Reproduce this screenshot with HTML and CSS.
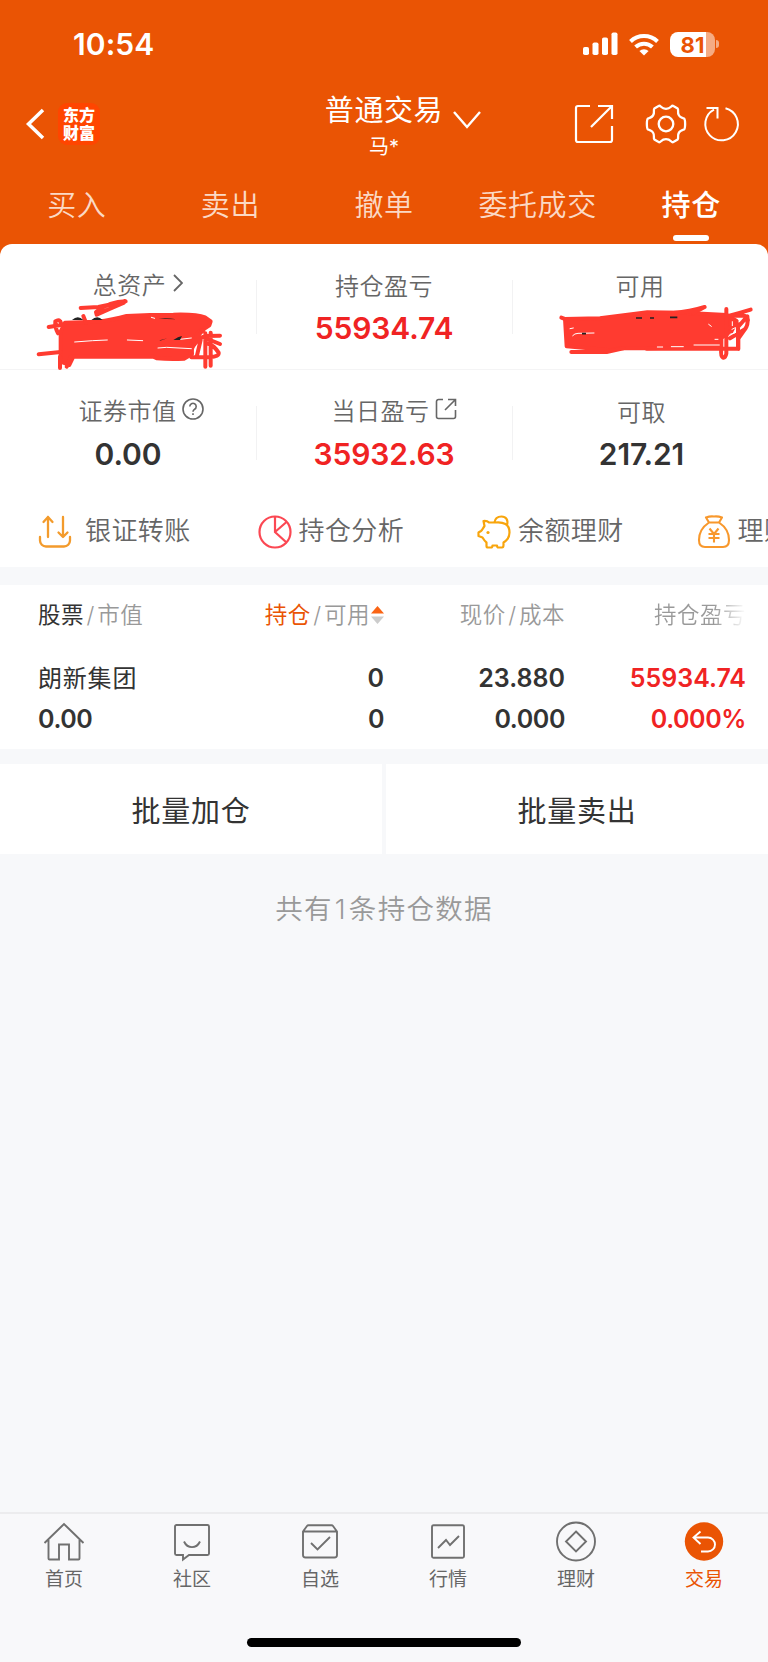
FILE: index.html
```html
<!DOCTYPE html>
<html lang="zh-CN">
<head>
    <meta charset="UTF-8">
    <meta name="viewport" content="width=device-width, initial-scale=1.0">
    <title>普通交易 - 持仓</title>
    <link rel="stylesheet" href="styles.css">
</head>
<body>
    <!-- 顶部 -->
    <header class="header">
        <div class="status-bar">
            <span class="time">10:54</span>
            <div class="status-icons">
                <svg width="36" height="24" viewBox="0 0 36 24" fill="#fff">
                    <rect x="0" y="15" width="6" height="8" rx="1.8"/>
                    <rect x="9.5" y="10.5" width="6" height="12.5" rx="1.8"/>
                    <rect x="19" y="5.5" width="6" height="17.5" rx="1.8"/>
                    <rect x="28.5" y="0.5" width="6" height="22.5" rx="1.8"/>
                </svg>
                <svg class="wifi" width="30" height="23" viewBox="0 0 30 23" fill="none" stroke="#fff" stroke-width="4">
                    <path d="M1.500 8.500a19.500 19.500 0 0 1 27 0"/>
                    <path d="M6.600 14a12.200 12.200 0 0 1 16.800 0"/>
                    <path d="M15 22.500l-4.600-4.400a6.800 6.800 0 0 1 9.200 0z" fill="#fff" stroke="none"/>
                </svg>
                <div class="battery"><span>81</span></div>
                <i class="battery-tip"></i>
            </div>
        </div>

        <div class="nav">
            <div class="nav-left">
                <svg width="20" height="34" viewBox="0 0 20 34" fill="none" stroke="#fff" stroke-width="3.5"><path d="M18 3L3.500 17 18 31"/></svg>
                <div class="logo">东方<br>财富</div>
            </div>
            <div class="nav-title">
                <h1>普通交易</h1>
                <p>马*</p>
            </div>
            <svg class="nav-arrow" width="28" height="18" viewBox="0 0 28 18" fill="none" stroke="#fff" stroke-width="2.4"><path d="M1 1l13 15L27 1"/></svg>
            <div class="nav-right">
                <svg width="40" height="40" viewBox="0 0 40 40" fill="none" stroke="#fff" stroke-width="2.2">
                    <path d="M16 2H4a2 2 0 0 0-2 2v32a2 2 0 0 0 2 2h32a2 2 0 0 0 2-2V22"/>
                    <path d="M24 2h14v13M38 2L17 23"/>
                </svg>
                <svg class="gear" width="42" height="42" viewBox="0 0 42 42" fill="none" stroke="#fff" stroke-width="2.3">
                    <circle cx="21" cy="21" r="7.3"/>
                    <path d="M14 2.800C16 2.300 16 5.800 21 5.800S26 2.300 28 2.800l4.600 2.700c1.500 1.500-.8 3.500 1.400 7 1.500 2.300 3 2 5 3 1.500 1 1.500 10 0 11-2 1-3.500.7-5 3-2.200 3.500.1 5.500-1.400 7L28 39.200c-2 .5-2-3-7-3s-5 3.500-7 3l-4.600-2.700c-1.500-1.500.8-3.500-1.400-7-1.500-2.300-3-2-5-3-1.500-1-1.500-10 0-11 2-1 3.500-.7 5-3 2.200-3.500-.1-5.500 1.400-7z"/>
                </svg>
                <svg width="38" height="38" viewBox="0 0 38 38" fill="none" stroke="#fff" stroke-width="2">
                    <path d="M22.500 3.200A16.300 16.300 0 1 1 11 4.600M3.500 3H14.500V13.500"/>
                </svg>
            </div>
        </div>

        <nav class="tabs">
            <a>买入</a>
            <a>卖出</a>
            <a>撤单</a>
            <a>委托成交</a>
            <a class="on">持仓</a>
        </nav>
    </header>

    <!-- 资产 -->
    <section class="assets">
        <div class="asset-row">
            <div class="cell">
                <div class="label up total-label">总资产<svg class="more" width="10" height="18" viewBox="0 0 10 18" fill="none" stroke="#666" stroke-width="1.8"><path d="M1 1l8 8-8 8"/></svg></div>
                <svg class="mark mark-left" width="200" height="84" viewBox="0 0 600 252" fill="none" stroke="#ff3b30" stroke-width="12" stroke-linecap="round" stroke-linejoin="round">
                    <path d="M92 215V125L105 98 200 95Q250 90 290 78 360 74 430 74 500 72 525 82L542 94 538 106 520 118Q500 125 500 140L485 160 486 192 462 206Q420 208 380 205L370 200H130L118 225z" fill="#ff3b30"/>
                    <path d="M152 54L205 51 287 34Q240 34 198 66L200 74Q240 56 282 38M56 111L98 104M84 130Q74 112 76 94Q90 84 94 102M160 78L168 98M26 193L92 186M90 234V200M110 230L122 200M526 230V130M542 227V128M480 188Q500 140 530 138L570 137M520 142L570 162M490 152L520 120M484 202H540Q568 200 566 188 550 164 530 160M500 200L512 150"/>
                    <path d="M134 156L188 152 232 150M292 150L338 152M364 82L374 85M384 174L410 172 484 176M450 148L484 144" stroke="#fff" stroke-width="3"/>
                    <path d="M126 90Q144 74 160 90zM184 90Q202 74 218 90zM386 86Q410 83 440 88zM388 153L412 145 392 150zM430 150Q445 140 456 138L450 150z" fill="#222" stroke="none"/>
                </svg>
            </div>
            <div class="cell">
                <div class="label">持仓盈亏</div>
                <div class="value red">55934.74</div>
            </div>
            <div class="cell">
                <div class="label">可用</div>
                <svg class="mark mark-right" width="210" height="70" viewBox="0 0 630 210" fill="none" stroke="#ff3b30" stroke-width="12" stroke-linecap="round" stroke-linejoin="round">
                    <path d="M45 72L150 70 292 52 400 53 530 60 560 78 544 110 508 132 510 156 290 160H210L180 166 50 154z" fill="#ff3b30"/>
                    <path d="M34 68L50 74M370 54Q420 50 464 36L430 54M64 171H170L220 160M530 64Q570 54 602 44M529 42V176Q526 190 519 188 511 184 514 160V130M290 161H564V96L592 64Q596 90 584 104L564 132M550 62H582Q592 62 594 76M540 130L586 102M540 98L564 88M565 162V130"/>
                    <path d="M60 101L70 99M68 122Q74 115 84 115L132 114M476 88L484 94M432 150H508M364 155H400M322 156H338M495 133H504M547 80V92M546 103L556 98M540 118L554 114M540 144L554 140" stroke="#fff" stroke-width="3"/>
                    <path d="M96 116H108M258 69H276M300 69H312M360 67H382" stroke="#222" stroke-width="5" stroke-linecap="butt"/>
                </svg>
            </div>
        </div>
        <div class="asset-row">
            <div class="cell">
                <div class="label up icon-label">证券市值<svg width="22" height="22" viewBox="0 0 22 22" fill="none" stroke="#666" stroke-width="1.6">
                    <circle cx="11" cy="11" r="10"/>
                    <path d="M7.800 8.500a3.200 3.200 0 1 1 4.800 2.800c-1.200.7-1.600 1.200-1.600 2.500M11 15.200v1.800"/>
                </svg></div>
                <div class="value">0.00</div>
            </div>
            <div class="cell">
                <div class="label up icon-label today">当日盈亏<svg width="22" height="22" viewBox="0 0 22 22" fill="none" stroke="#666" stroke-width="1.6">
                    <path d="M8 1.500H3.500a2 2 0 0 0-2 2v15a2 2 0 0 0 2 2h15a2 2 0 0 0 2-2V12"/>
                    <path d="M13 1.500h7.500V8M20.500 1.500L10 12"/>
                </svg></div>
                <div class="value red">35932.63</div>
            </div>
            <div class="cell last">
                <div class="label">可取</div>
                <div class="value">217.21</div>
            </div>
        </div>

        <div class="actions">
            <div class="action first">
                <svg width="34" height="34" viewBox="0 0 34 34" fill="none" stroke="#f39b2c" stroke-width="2.3" stroke-linecap="round" stroke-linejoin="round">
                    <path d="M2 22v3.500a6 6 0 0 0 6 6h18a6 6 0 0 0 6-6V22"/>
                    <path d="M10 22V2M5.500 7L10 2l4.500 5M25 2v20M20.500 17.500L25 22l4.500-4.500"/>
                </svg>
                <span>银证转账</span>
            </div>
            <div class="action">
                <svg width="34" height="34" viewBox="0 0 34 34" fill="none" stroke="#fb4853" stroke-width="2.2">
                    <circle cx="17" cy="17" r="15.5"/>
                    <path d="M17 1.500V17L28.500 27.500M17 17L28.500 7"/>
                </svg>
                <span>持仓分析</span>
            </div>
            <div class="action">
                <svg width="34" height="34" viewBox="0 0 34 34" fill="none" stroke="#f8a50c" stroke-width="2.2" stroke-linejoin="round">
                    <path d="M18 7.500H12C10.500 6 8.500 5.800 6.500 6L7.500 11C6 13 5.500 15 4 16L1.500 17.500V21L5.500 22.500C7 25 8 26.500 9.500 27.500V31Q9.500 32.500 11 32.500H14Q15.500 32.500 15.500 30.500H20Q20 32.500 21.500 32.500H25Q26.500 32.500 26.500 30V27.500C30.500 25 32.500 21.500 32.500 17.500C32.500 13.500 31 10.500 28.500 9C25 7 22 7 18 7.500z"/>
                    <path d="M17.500 7.500C18 3.500 21 1.500 24.500 1.500C29 1.500 31.500 5 30 10"/>
                    <circle cx="11" cy="17.5" r="1.6" fill="#f8a50c" stroke="none"/>
                </svg>
                <span>余额理财</span>
            </div>
            <div class="action">
                <svg width="34" height="34" viewBox="0 0 34 34" fill="none" stroke="#f8982c" stroke-width="2.1" stroke-linejoin="round">
                    <path d="M12 7.500L9 2.500Q13 1 17 1.500Q21 1 25 2.500L22 7.500zM12 7.500C6 11.500 2 18 2 25Q2 32 8 32H26Q32 32 32 25C32 18 28 11.500 22 7.500"/>
                    <path d="M12.500 13.500L17 19l4.500-5.500M11.500 19h11M11.500 23h11M17 19v8.500"/>
                </svg>
                <span>理财</span>
            </div>
        </div>
    </section>

    <!-- 持仓列表 -->
    <section class="holdings">
        <div class="row head">
            <div><b>股票</b><i>/</i>市值</div>
            <div class="sorted"><b>持仓</b><i>/</i>可用<svg width="13" height="20" viewBox="0 0 13 20"><path d="M0 8.500L6.500 1 13 8.500z" fill="#fa6414"/><path d="M0 11.500h13L6.500 19z" fill="#ccc"/></svg></div>
            <div>现价<i>/</i>成本</div>
            <div><span class="fade">持仓盈亏</span></div>
        </div>
        <div class="row stock">
            <div><span class="name">朗新集团</span></div>
            <div>0</div>
            <div>23.880</div>
            <div class="red">55934.74</div>
        </div>
        <div class="row stock second">
            <div>0.00</div>
            <div>0</div>
            <div>0.000</div>
            <div class="red">0.000%</div>
        </div>
    </section>

    <div class="batch">
        <button>批量加仓</button>
        <button>批量卖出</button>
    </div>

    <p class="total">共有<span>1</span>条持仓数据</p>

    <!-- 底部导航 -->
    <footer class="tabbar">
        <div class="tabbar-items">
            <a>
                <svg width="42" height="42" viewBox="0 0 42 42"><path d="M1.500 22L21 3l19.500 19M5.500 19v18.500a1 1 0 0 0 1 1H16v-15h10v15h9.500a1 1 0 0 0 1-1V19"/></svg>
                首页
            </a>
            <a>
                <svg width="42" height="42" viewBox="0 0 42 42"><path d="M5.500 4h31a1.500 1.500 0 0 1 1.500 1.500v27a1.500 1.500 0 0 1-1.500 1.500H18l-6 4.500V34H5.500a1.500 1.500 0 0 1-1.500-1.500v-27a1.500 1.500 0 0 1 1.500-1.500zM13 20.500c3.500 7.500 12.500 7.500 16 0"/></svg>
                社区
            </a>
            <a>
                <svg width="42" height="42" viewBox="0 0 42 42"><path d="M4 10.500l4-5.500q.5-.7 1.500-.7h23q1 0 1.500.7l4 5.500V34q0 2.500-2.500 2.500h-29Q4 36.500 4 34zM4 10.500h34M12 22l6.500 6.500L31 16"/></svg>
                自选
            </a>
            <a>
                <svg width="42" height="42" viewBox="0 0 42 42"><rect x="5" y="4.300" width="32" height="32.500" rx="1.500"/><path d="M11 27l8-8 4 5 9-9"/></svg>
                行情
            </a>
            <a>
                <svg width="42" height="42" viewBox="0 0 42 42"><circle cx="21" cy="20.500" r="19"/><path d="M21 10.500l10 10-10 10-10-10z"/></svg>
                理财
            </a>
            <a class="on">
                <svg width="42" height="42" viewBox="0 0 42 42"><circle cx="21" cy="20.500" r="19.200"/><path d="M17.500 10.500L10.500 16.500l7 6.500M10.500 16.500H25a7 7 0 0 1 0 14H18"/></svg>
                交易
            </a>
        </div>
        <div class="home-bar"></div>
    </footer>
</body>
</html>
```

FILE: styles.css
```css
* {
    box-sizing: border-box;
}
body {
    margin: 0;
    height: 1662px;
    display: flex;
    flex-direction: column;
    overflow: hidden;
    background-color: #f7f8fa;
    color: #333;
    font-family: Inter, "Noto Sans CJK SC", sans-serif;
}
svg {
    display: block;
    flex: none;
}
.red {
    color: #f02323;
}

/* 顶部 */
.header {
    height: 256px;
    background-color: #ea5404;
    color: #fff;
}
.status-bar {
    display: flex;
    justify-content: space-between;
    align-items: center;
    height: 88px;
    padding: 0 49px 0 73px;
}
.time {
    font-size: 30px;
    font-weight: 600;
    letter-spacing: 0.1px;
}
.status-icons {
    display: flex;
    align-items: center;
}
.wifi {
    margin: 0 11px 0 10px;
}
.battery {
    width: 45px;
    height: 25px;
    border-radius: 8px;
    background: linear-gradient(90deg, #fff 81%, #f5ab83 81%);
    color: #ea5404;
    font-size: 22px;
    font-weight: 700;
    line-height: 26px;
    text-align: center;
}
.battery-tip {
    width: 3px;
    height: 8px;
    margin-left: 1px;
    border-radius: 0 4px 4px 0;
    background-color: #f5ab83;
}
.nav {
    position: relative;
    display: flex;
    justify-content: space-between;
    height: 84px;
    padding: 0 27px 0 25px;
}
.nav-left,
.nav-right {
    display: flex;
    align-items: center;
    height: 72px;
}
.logo {
    width: 42px;
    height: 42px;
    margin-left: 13px;
    padding-top: 3px;
    border-radius: 9px;
    background-color: #ff4500;
    font-size: 16px;
    font-weight: 900;
    line-height: 18px;
    text-align: center;
}
.nav-title {
    position: absolute;
    left: 284px;
    top: 2px;
    width: 200px;
    text-align: center;
}
.nav-title h1 {
    margin: 0;
    font-size: 29px;
    font-weight: 400;
    line-height: 42px;
    letter-spacing: 0.6px;
}
.nav-title p {
    margin: 3px 0 0;
    font-size: 20px;
    line-height: 24px;
}
.nav-arrow {
    position: absolute;
    left: 453px;
    top: 23px;
}
.gear {
    margin: 0 16px 0 31px;
}
.tabs {
    display: flex;
    height: 72px;
}
.tabs a {
    position: relative;
    flex: 1;
    color: #fbd9c5;
    font-size: 29px;
    font-weight: 350;
    line-height: 68px;
    letter-spacing: 0.6px;
    text-align: center;
    white-space: nowrap;
}
.tabs .on {
    color: #fff;
    font-weight: 500;
}
.tabs .on::after {
    content: "";
    position: absolute;
    left: 50%;
    top: 63px;
    width: 36px;
    height: 6px;
    margin-left: -18px;
    border-radius: 3px;
    background-color: #fff;
}

/* 资产 */
.assets {
    position: relative;
    height: 323px;
    margin-top: -12px;
    border-radius: 12px 12px 0 0;
    background-color: #fff;
}
.asset-row {
    display: flex;
    height: 126px;
}
.asset-row:first-child {
    border-bottom: 1px solid #f4f4f5;
}
.cell {
    position: relative;
    width: 256px;
    padding-top: 22px;
    text-align: center;
}
.cell + .cell::before {
    content: "";
    position: absolute;
    left: 0;
    top: 36px;
    width: 1px;
    height: 54px;
    background-color: #f2f2f3;
}
.label {
    display: flex;
    justify-content: center;
    align-items: center;
    height: 36px;
    color: #666;
    font-size: 24px;
    font-weight: 350;
    letter-spacing: 0.5px;
}
.up {
    position: relative;
    top: -1px;
}
.total-label {
    padding-left: 20px;
}
.more {
    margin-left: 7px;
}
.icon-label svg {
    margin-left: 5px;
}
.icon-label {
    padding-left: 26px;
}
.today {
    padding-left: 20px;
}
.last {
    padding-left: 3px;
}
.value {
    margin-top: 2px;
    font-size: 30px;
    font-weight: 600;
    line-height: 48px;
    letter-spacing: -0.1px;
}
.mark {
    position: absolute;
}
.mark-left {
    left: 30px;
    top: 46px;
}
.mark-right {
    left: 38px;
    top: 51px;
}
.actions {
    display: flex;
    height: 71px;
    padding-left: 38px;
    overflow: hidden;
}
.action {
    display: flex;
    flex: none;
    align-items: center;
    width: 219.5px;
    color: #666;
    font-size: 26px;
    font-weight: 350;
    line-height: 34px;
    letter-spacing: 0.4px;
}
.action span {
    margin-top: -1px;
    margin-left: 7px;
}
.action.first span {
    margin-left: 13px;
}

/* 持仓列表 */
.holdings {
    height: 164px;
    margin-top: 18px;
    padding: 8px 22px 0 38px;
    background-color: #fff;
}
.row {
    display: grid;
    grid-template-columns: 165px 181px 181px 181px;
    text-align: right;
}
.row > :first-child {
    text-align: left;
}
.head {
    height: 65px;
    color: #999;
    font-size: 22.5px;
    font-weight: 350;
    line-height: 43px;
    letter-spacing: 0.5px;
}
.head b {
    color: #333;
    font-weight: 400;
}
.head i {
    margin: 0 2.5px;
    font-style: normal;
}
.sorted {
    display: flex;
    justify-content: flex-end;
    align-items: center;
    height: 43px;
}
.head .sorted b {
    color: #ea5404;
}
.sorted svg {
    margin-left: 1px;
}
.fade {
    background: linear-gradient(90deg, #999 65%, #fff);
    -webkit-background-clip: text;
    background-clip: text;
    color: transparent;
}
.stock {
    height: 41px;
    font-size: 25px;
    font-weight: 600;
    line-height: 41px;
}
.second {
    letter-spacing: -0.4px;
    line-height: 40px;
}
.stock .name {
    font-size: 24px;
    font-weight: 400;
    letter-spacing: 0.8px;
}

/* 批量操作 */
.batch {
    display: flex;
    gap: 4px;
    height: 90px;
    margin-top: 15px;
}
.batch button {
    flex: 1;
    padding: 0;
    border: none;
    background-color: #fff;
    color: #333;
    font: inherit;
    font-size: 29px;
    letter-spacing: 0.7px;
}
.total {
    margin: 35px 0 0;
    color: #999;
    font-size: 27.5px;
    font-weight: 350;
    line-height: 40px;
    letter-spacing: 1.3px;
    text-align: center;
}
.total span {
    margin: 0 2px;
}

/* 底部导航 */
.tabbar {
    height: 150px;
    margin-top: auto;
    border-top: 2px solid #ececee;
    background-color: #f8f8fa;
}
.tabbar-items {
    display: flex;
    height: 124px;
    padding-top: 7px;
}
.tabbar a {
    display: flex;
    flex: 1;
    flex-direction: column;
    align-items: center;
    color: #666;
    font-size: 19px;
    line-height: 34px;
}
.tabbar svg {
    fill: none;
    stroke: #707070;
    stroke-width: 1.9;
}
.tabbar .on {
    color: #ea5404;
}
.tabbar .on svg {
    stroke: #fff;
}
.tabbar .on circle {
    fill: #ea5404;
    stroke: none;
}
.home-bar {
    width: 274px;
    height: 9px;
    margin: 0 auto;
    border-radius: 5px;
    background-color: #000;
}
```
